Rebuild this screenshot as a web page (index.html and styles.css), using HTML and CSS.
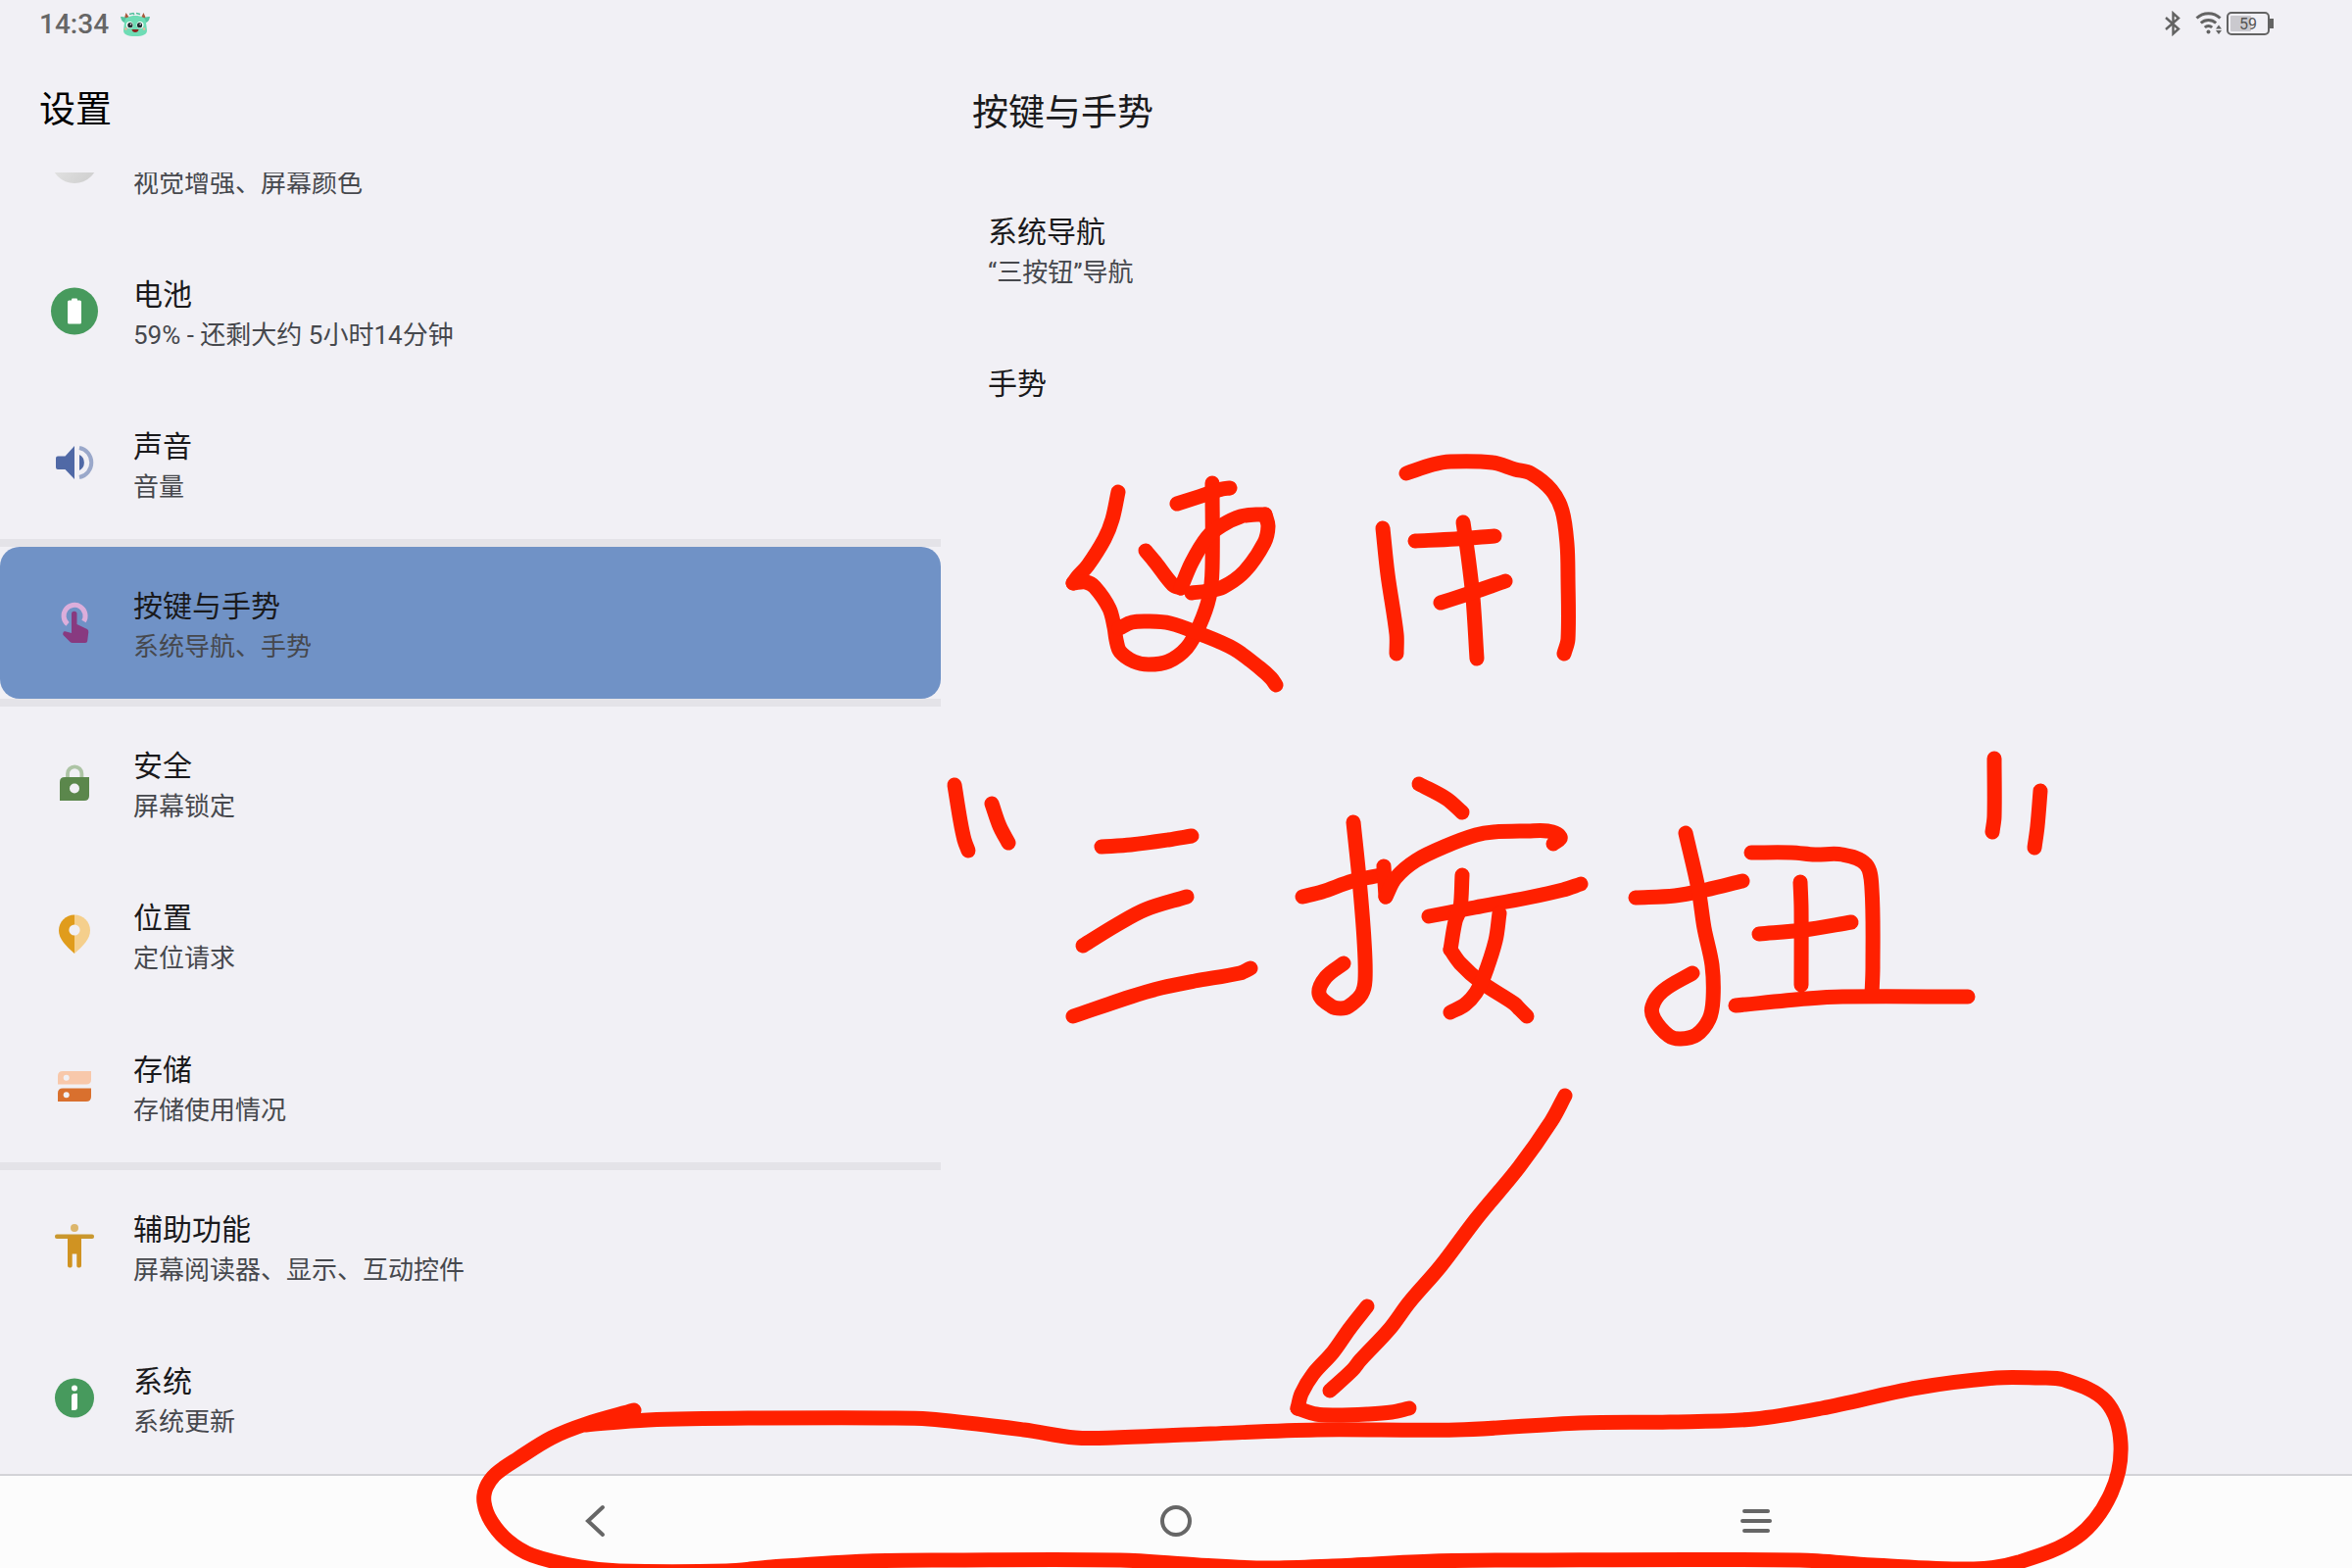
FILE: index.html
```html
<!DOCTYPE html>
<html lang="zh-CN">
<head>
<meta charset="UTF-8" />
<meta name="viewport" content="width=device-width, initial-scale=1" />
<title>设置</title>
<link rel="stylesheet" href="styles.css">
</head>
<body>

<header class="status-bar">
  <div class="status-left">
    <span class="clock">14:34</span>
    <svg class="app-icon" width="30" height="26" viewBox="0 0 30 26">
      <path d="M3.500 8 L5.500 1 L9 6 Z M26.500 8 L23.500 1 L21 6 Z" fill="#a85a3c" />
      <path d="M0 5 Q4 4.500 7 7 L5 11 Q1 11 0 5 Z M30 5 Q26 4.500 23 7 L25 11 Q29 11 30 5 Z" fill="#55c4a0" />
      <path d="M15 4 C22 4 25.500 6 26 11 L27 19 C27 23 23 25 15 25 C7 25 3 23 3 19 L4 11 C4.500 6 8 4 15 4 Z" fill="#6fdcb5" />
      <path d="M9 2.500 L13 1.500 L14 3 M16 1.500 L20 2.500" stroke="#4fbf9b" stroke-width="1.500" fill="none" />
      <circle cx="9.300" cy="13.500" r="3.500" fill="#fff" />
      <circle cx="20" cy="13.500" r="3.500" fill="#fff" />
      <circle cx="9.800" cy="13.700" r="2.600" fill="#1f2e30" />
      <circle cx="19.500" cy="13.700" r="2.600" fill="#1f2e30" />
      <circle cx="10.500" cy="12.700" r="0.800" fill="#fff" />
      <circle cx="20.200" cy="12.700" r="0.800" fill="#fff" />
      <circle cx="5.500" cy="17.500" r="1.300" fill="#f0b49a" />
      <circle cx="24" cy="17.500" r="1.300" fill="#f0b49a" />
      <path d="M11.500 18 H18.500 Q18 21 15 21 Q12 21 11.500 18 Z" fill="#8c2420" />
    </svg>
  </div>
  <div class="status-right">
    <svg width="18" height="26" viewBox="0 0 18 26" fill="none" stroke="#636363" stroke-width="2.400">
      <path d="M2 7 L15 18.500 L9.500 23.500 V2.500 L15 7.500 L2 19" />
    </svg>
    <svg class="wifi" width="28" height="26" viewBox="0 0 28 26" fill="none" stroke="#636363" stroke-width="3">
      <path d="M1.500 7.500 A17.500 17.500 0 0 1 25.500 7.500" />
      <path d="M5.800 12.500 A11.500 11.500 0 0 1 21.200 12.500" />
      <path d="M9.800 17 A5.500 5.500 0 0 1 17.200 17" />
      <circle cx="13.500" cy="21.500" r="2" fill="#636363" stroke="none" />
      <path d="M24 14.500 L27 18.500 H21 Z M24 24 L27 20 H21 Z" fill="#636363" stroke="none" />
    </svg>
    <svg width="48" height="26" viewBox="0 0 48 26">
      <rect x="1" y="2" width="42" height="22" rx="4" fill="none" stroke="#636363" stroke-width="2" />
      <rect x="4" y="5" width="21" height="16" rx="1" fill="#cac9ce" />
      <rect x="44" y="8" width="4" height="10" fill="#636363" />
      <text class="battery-level" x="22" y="19" text-anchor="middle">59</text>
    </svg>
  </div>
</header>

<main class="panes">
  <section class="pane-list">
    <h1 class="list-title">设置</h1>
    <div class="list">
      <a class="row" href="#display">
        <svg class="icon" viewBox="0 0 72 72">
          <defs>
            <linearGradient id="gray" x1="0" y1="0" x2="1" y2="1">
              <stop offset="0" stop-color="#efefef" />
              <stop offset="1" stop-color="#cccccc" />
            </linearGradient>
          </defs>
          <circle cx="36" cy="36" r="24" fill="url(#gray)" />
        </svg>
        <span class="texts">
          <span class="title">显示</span>
          <span class="summary">视觉增强、屏幕颜色</span>
        </span>
      </a>
      <a class="row" href="#battery">
        <svg class="icon" viewBox="0 0 72 72">
          <circle cx="36" cy="35.500" r="24" fill="#479a5d" />
          <rect x="33" y="22.500" width="6" height="4" rx="1" fill="#fff" />
          <rect x="29" y="24.500" width="14" height="24" rx="1.500" fill="#fff" />
        </svg>
        <span class="texts">
          <span class="title">电池</span>
          <span class="summary">59% - 还剩大约 5小时14分钟</span>
        </span>
      </a>
      <a class="row" href="#sound">
        <svg class="icon" viewBox="0 0 72 72">
          <path d="M19 28.500 H26.500 L36 18 V52 L26.500 42 H19 Q17 42 17 40 V30.500 Q17 28.500 19 28.500 Z" fill="#5069a6" />
          <path d="M41 27 A9 9 0 0 1 41 43 Z" fill="#5069a6" />
          <path d="M41 20 A15.300 15.300 0 0 1 41 50" fill="none" stroke="#9aa8ca" stroke-width="4" />
        </svg>
        <span class="texts">
          <span class="title">声音</span>
          <span class="summary">音量</span>
        </span>
      </a>
      <hr class="divider">
      <a class="row selected" href="#gestures">
        <svg class="icon" viewBox="0 0 72 72">
          <path d="M29 36.800 A11 11 0 1 1 45.500 34" fill="none" stroke="#dcaedb" stroke-width="5" />
          <path d="M33 46 V26.500 A2.750 2.750 0 0 1 38.500 26.500 V37 L49 42 Q50.500 43 50.300 45 L49.200 54 Q49 56 47 56 H34 Q32.500 56 31.500 55 L24.500 48 Q24 47 24.300 46 L25 44.500 Q25.500 44 26.500 44.200 Z" fill="#883a80" />
        </svg>
        <span class="texts">
          <span class="title">按键与手势</span>
          <span class="summary">系统导航、手势</span>
        </span>
      </a>
      <hr class="divider">
      <a class="row" href="#security">
        <svg class="icon" viewBox="0 0 72 72">
          <path d="M29 31 V26.500 A7.200 7.200 0 0 1 43.400 26.500 V31" fill="none" stroke="#adc4a5" stroke-width="3.800" />
          <path fill-rule="evenodd" d="M26 30 H51 V49 Q51 54 46 54 H21 V35 Q21 30 26 30 Z M36 36.500 A5 5 0 1 0 36 46.500 A5 5 0 1 0 36 36.500 Z" fill="#5b874c" />
        </svg>
        <span class="texts">
          <span class="title">安全</span>
          <span class="summary">屏幕锁定</span>
        </span>
      </a>
      <a class="row" href="#location">
        <svg class="icon" viewBox="0 0 72 72">
          <path d="M36 15.500 C27 15.500 20 22.500 20 31.500 C20 40 27 47 36 55 Z" fill="#e09c1c" />
          <path d="M36 15.500 C45 15.500 52 22.500 52 31.500 C52 40 45 47 36 55 Z" fill="#f5cf8c" />
          <circle cx="36" cy="31" r="5.600" fill="#f1f0f5" />
        </svg>
        <span class="texts">
          <span class="title">位置</span>
          <span class="summary">定位请求</span>
        </span>
      </a>
      <a class="row" href="#storage">
        <svg class="icon" viewBox="0 0 72 72">
          <path d="M24 20 H53 V28.500 Q53 33.500 48 33.500 H19 V25 Q19 20 24 20 Z" fill="#f8c8ab" />
          <path d="M24 37.500 H53 V46 Q53 51 48 51 H19 V42.500 Q19 37.500 24 37.500 Z" fill="#d9702e" />
          <circle cx="27.700" cy="26.800" r="3" fill="#f1f0f5" />
          <circle cx="27.700" cy="44.200" r="3" fill="#f1f0f5" />
        </svg>
        <span class="texts">
          <span class="title">存储</span>
          <span class="summary">存储使用情况</span>
        </span>
      </a>
      <hr class="divider">
      <a class="row" href="#accessibility">
        <svg class="icon" viewBox="0 0 72 72">
          <circle cx="36" cy="17" r="4" fill="#dcb66c" />
          <rect x="16" y="23.500" width="40" height="4.500" rx="2" fill="#c9982f" />
          <path d="M29 25 H43 V55.500 Q43 57.500 41 57.500 H40 Q38.300 57.500 38.300 55.500 V43.500 H33.700 V55.500 Q33.700 57.500 32 57.500 H31 Q29 57.500 29 55.500 Z" fill="#d09322" />
        </svg>
        <span class="texts">
          <span class="title">辅助功能</span>
          <span class="summary">屏幕阅读器、显示、互动控件</span>
        </span>
      </a>
      <a class="row" href="#system">
        <svg class="icon" viewBox="0 0 72 72">
          <circle cx="36" cy="35.500" r="20" fill="#479a5d" />
          <circle cx="36" cy="25.500" r="3" fill="#fff" />
          <path d="M36 31 H39 V45 Q39 48 36 48 H33 V34 Q33 31 36 31 Z" fill="#fff" />
        </svg>
        <span class="texts">
          <span class="title">系统</span>
          <span class="summary">系统更新</span>
        </span>
      </a>
    </div>
  </section>

  <section class="pane-detail">
    <h2 class="detail-title">按键与手势</h2>
    <a class="row" href="#navigation">
      <span class="texts">
        <span class="title">系统导航</span>
        <span class="summary">“三按钮”导航</span>
      </span>
    </a>
    <a class="row" href="#gesture">
      <span class="texts">
        <span class="title">手势</span>
      </span>
    </a>
  </section>
</main>

<nav class="nav-bar">
  <button type="button" aria-label="返回">
    <svg width="36" height="36" viewBox="0 0 36 36">
      <path d="M25 4 L10 18 L25 32" />
    </svg>
  </button>
  <button type="button" aria-label="主屏幕">
    <svg width="36" height="36" viewBox="0 0 36 36">
      <circle cx="18" cy="18" r="14" />
    </svg>
  </button>
  <button type="button" aria-label="最近任务">
    <svg width="36" height="36" viewBox="0 0 36 36">
      <path d="M6 8 H30 M4 18 H32 M6 28 H30" />
    </svg>
  </button>
</nav>

<svg class="ink" id="ink" viewBox="0 0 2400 1600" preserveAspectRatio="none"></svg>

<script src="ink.js"></script>
</body>
</html>
```

FILE: styles.css
```css
* {
  box-sizing: border-box;
}
body {
  margin: 0;
  height: 100vh;
  display: flex;
  flex-direction: column;
  position: relative;
  overflow: hidden;
  background: #f1f0f5;
  color: #1a1a1c;
  font-family: Roboto, "Noto Sans CJK SC", sans-serif;
}
h1, h2 {
  margin: 0;
  font-size: 37px;
  font-weight: 400;
  line-height: 54px;
}
a {
  color: inherit;
  text-decoration: none;
}

/* status bar */
.status-bar {
  flex: none;
  height: 48px;
  padding: 0 80px 0 40px;
  display: flex;
  justify-content: space-between;
  align-items: center;
}
.status-left, .status-right {
  display: flex;
  align-items: center;
}
.status-left {
  gap: 12px;
  padding-top: 2px;
}
.clock {
  font-size: 28px;
  font-weight: 500;
  line-height: 48px;
  color: #666;
}
.wifi {
  margin: 0 4px 0 14px;
}
.battery-level {
  font-size: 16px;
  fill: #555;
}

/* two panes */
.panes {
  flex: 1;
  min-height: 0;
  display: flex;
}
.pane-list {
  width: 40%;
  display: flex;
  flex-direction: column;
}
.list-title {
  flex: none;
  height: 128px;
  padding: 38px 40px 0;
  color: #000;
}
/* scrolled to the end */
.list {
  flex: 1;
  min-height: 0;
  display: flex;
  flex-direction: column;
  justify-content: flex-end;
  overflow: hidden;
}
.row {
  flex: none;
  display: flex;
  align-items: center;
  gap: 24px;
  padding: 34px 40px;
}
.row.selected {
  background: #7092c6;
  border-radius: 20px;
}
.icon {
  width: 72px;
  height: 72px;
}
.texts {
  display: flex;
  flex-direction: column;
  padding-top: 5px;
}
.title {
  font-size: 30px;
  line-height: 44px;
}
.summary {
  font-size: 26px;
  line-height: 38px;
  color: #46484d;
}
.divider {
  flex: none;
  width: 100%;
  height: 8px;
  margin: 0;
  border: none;
  background: #e4e3e8;
}

.pane-detail {
  flex: 1;
}
.detail-title {
  height: 128px;
  padding: 41px 32px 0;
}
.pane-detail .row {
  padding-left: 48px;
}

/* three button navigation */
.nav-bar {
  flex: none;
  height: 96px;
  padding: 0 13% 2px;
  display: flex;
  background: #fcfcfc;
  border-top: 2px solid #d3d3d7;
}
.nav-bar button {
  flex: 1;
  display: flex;
  align-items: center;
  justify-content: center;
  padding: 0;
  border: none;
  background: none;
}
.nav-bar svg {
  fill: none;
  stroke: #666;
  stroke-width: 4;
  stroke-linecap: round;
}

/* red pen on top of everything */
.ink {
  position: absolute;
  inset: 0;
  width: 100%;
  height: 100%;
  pointer-events: none;
}
.ink path {
  fill: none;
  stroke: #ff2000;
  stroke-width: 15;
  stroke-linecap: round;
  stroke-linejoin: round;
}
```

FILE: ink.js
```js
// one entry per pen stroke, x,y pairs
const strokes = [
  '1141,502 1135,530 1127,550 1110,577 1100,588 1095,595',
  '1095,595 1108,594 1117,599 1132,621 1137,640 1139,653 1143,665 1157,675 1172,678 1192,675 1211,661 1224,638 1234,609 1237,580 1237,493',
  '1201,514 1232,504 1247,499 1255,498',
  '1169,562 1179,574 1197,597 1205,600',
  '1205,600 1216,574 1232,548 1247,536 1266,527 1282,525 1291,525',
  '1291,525 1294,537 1290,554 1270,583 1248,599 1232,603 1216,605',
  '1142,641 1155,635 1171,634 1194,636 1225,647 1259,662 1286,682 1297,692 1302,699',
  '1411,539 1416,586 1425,647 1425,667',
  '1435,483 1462,474 1480,471 1523,472 1546,479 1562,483 1583,500 1594,521 1599,555 1600,590 1600,652 1596,667',
  '1444,552 1485,550 1525,547',
  '1493,533 1498,567 1503,610 1507,672',
  '1470,615 1504,604 1536,593',
  '974,801 980,838 984,857 988,868',
  '1012,820 1020,843 1029,860',
  '1124,864 1154,862 1192,857 1216,853',
  '1105,965 1139,944 1169,928 1211,915',
  '1095,1037 1154,1017 1185,1008 1219,1001 1265,993 1276,988',
  '1448,800 1476,815 1492,829',
  '1381,839 1387,897 1392,960 1393,1000 1389,1015 1376,1027 1368,1029 1359,1027 1346,1014 1353,997 1371,983',
  '1329,915 1349,910 1380,899 1409,893',
  '1412,884 1414,915',
  '1414,915 1424,896 1445,878 1476,863 1506,852 1524,849 1559,848 1579,848 1592,854 1585,861',
  '1458,935 1505,926 1559,916 1595,908 1613,902',
  '1492,893 1490,927 1485,940 1480,969',
  '1480,969 1490,983 1511,1002 1545,1024 1551,1030 1558,1037',
  '1530,932 1526,960 1514,997 1506,1013 1495,1025 1480,1033',
  '1669,916 1709,914 1741,908 1778,899',
  '1720,850 1733,907 1739,947 1747,985 1748,1020 1744,1040 1731,1056 1715,1060 1703,1057 1688,1040 1686,1027 1697,1011 1727,993',
  '1787,870 1828,870 1852,872 1880,872 1904,882 1910,907 1911,987 1910,1015',
  '1837,900 1838,927 1838,1005',
  '1795,953 1840,949 1889,941',
  '1771,1026 1844,1019 1880,1017 2008,1017',
  '2035,774 2035,833 2033,849',
  '2082,807 2079,843 2076,865',
  '1597,1118 1583,1144 1550,1191 1507,1243 1470,1292 1438,1329 1418,1356 1388,1388 1380,1398 1357,1419',
  '1395,1333 1377,1356 1360,1380 1340,1402 1328,1422 1324,1437',
  '1324,1437 1343,1443 1363,1444 1395,1443 1420,1441 1438,1437',
  '647,1439 598,1453 563,1467 529,1488 506,1504 496,1518 494,1533 501,1552 518,1572 543,1587 592,1599 632,1603 741,1603 787,1599 885,1593 965,1592 1143,1592 1223,1597 1292,1600 1360,1598 1463,1593 1538,1592 1836,1592 1911,1597 2014,1601 2060,1594 2120,1568 2154,1524 2164,1473 2149,1430 2106,1408 2077,1406 2037,1406 1957,1416 1859,1437 1790,1448 1704,1451 1612,1452 1486,1459 1344,1459 1235,1463 1137,1467 1097,1467 1045,1459 948,1448 902,1447 770,1447 661,1449 598,1454'
];

// smooth curve through all the points
function curve(points) {
  let d = `M${points[0]}`;
  for (let i = 0; i < points.length - 1; i++) {
    const p0 = points[i - 1] || points[i];
    const p1 = points[i];
    const p2 = points[i + 1];
    const p3 = points[i + 2] || p2;
    // keep the handles short where a long and a short step meet
    const len = Math.hypot(p2[0] - p1[0], p2[1] - p1[1]) / 3;
    const l1 = Math.hypot(p2[0] - p0[0], p2[1] - p0[1]) || 1;
    const l2 = Math.hypot(p3[0] - p1[0], p3[1] - p1[1]) || 1;
    const c1 = [p1[0] + (p2[0] - p0[0]) / l1 * len, p1[1] + (p2[1] - p0[1]) / l1 * len];
    const c2 = [p2[0] - (p3[0] - p1[0]) / l2 * len, p2[1] - (p3[1] - p1[1]) / l2 * len];
    d += ` C${c1} ${c2} ${p2}`;
  }
  return d;
}

const ink = document.getElementById('ink');
strokes.forEach(stroke => {
  const points = stroke.split(' ').map(p => p.split(',').map(Number));
  const path = document.createElementNS('http://www.w3.org/2000/svg', 'path');
  path.setAttribute('d', curve(points));
  ink.appendChild(path);
});
```
